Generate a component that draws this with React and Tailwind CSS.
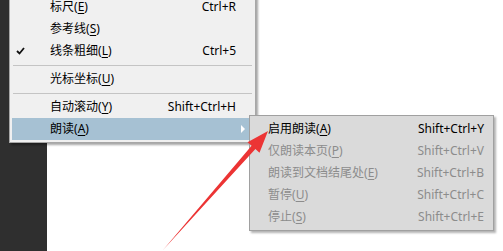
import React from 'react';

const font = { fontFamily: '"Noto Sans", "Noto Sans CJK SC", sans-serif' };

const mainItems = [
  { label: '标尺', key: 'E', shortcut: 'Ctrl+R' },
  { label: '参考线', key: 'S' },
  { label: '线条粗细', key: 'L', shortcut: 'Ctrl+5', checked: true },
  { sep: true },
  { label: '光标坐标', key: 'U' },
  { sep: true },
  { label: '自动滚动', key: 'Y', shortcut: 'Shift+Ctrl+H' },
  { label: '朗读', key: 'A', active: true, sub: true },
];

const subItems = [
  { label: '启用朗读', key: 'A', shortcut: 'Shift+Ctrl+Y' },
  { label: '仅朗读本页', key: 'P', shortcut: 'Shift+Ctrl+V', disabled: true },
  { label: '朗读到文档结尾处', key: 'E', shortcut: 'Shift+Ctrl+B', disabled: true },
  { label: '暂停', key: 'U', shortcut: 'Shift+Ctrl+C', disabled: true },
  { label: '停止', key: 'S', shortcut: 'Shift+Ctrl+E', disabled: true },
];

const Label = ({ label, k }) => (
  <span>
    {label}(<span className="underline underline-offset-2">{k}</span>)
  </span>
);

const MainMenu = () => (
  <div className="absolute left-[9px] top-[-7px] w-[247px] border border-[#a7a7a7] bg-[#f0f0f0] p-[2px] shadow-[2px_2px_2px_rgba(0,0,0,0.35)]">
    {mainItems.map((item, i) =>
      item.sep ? (
        <div key={i} className="flex h-[6px] items-center pl-[1px] pr-[1px]">
          <div className="h-px w-full bg-[#c4c4c4]" />
        </div>
      ) : (
        <div
          key={i}
          className={`relative flex h-[22px] items-center justify-between pl-[38px] pr-[17px] text-[12px] text-black ${
            item.active ? 'bg-[#a6c1d3]' : ''
          }`}
        >
          {item.checked && (
            <svg className="absolute left-[4px] top-[7px]" width="9" height="8" viewBox="0 0 9 8">
              <path d="M1 4 L3.5 6.5 L8 1" fill="none" stroke="#111" strokeWidth="1.8" />
            </svg>
          )}
          <Label label={item.label} k={item.key} />
          {item.shortcut && <span>{item.shortcut}</span>}
          {item.sub && (
            <svg className="absolute right-[8px] top-[7px]" width="4" height="8" viewBox="0 0 4 8">
              <path d="M0 0 L4 4 L0 8 Z" fill="#ffffff" />
            </svg>
          )}
        </div>
      )
    )}
  </div>
);

const SubMenu = () => (
  <div className="absolute left-[249px] top-[115px] w-[245px] border border-[#a0a0a0] bg-[#dadada] py-[2px] px-[2px] shadow-[2px_2px_2px_rgba(0,0,0,0.3)]">
    {subItems.map((item, i) => (
      <div
        key={i}
        className={`flex h-[22px] items-center justify-between pl-[16px] pr-[7px] text-[12px] ${
          item.disabled ? 'text-[#8c8c8c]' : 'text-black'
        }`}
      >
        <Label label={item.label} k={item.key} />
        <span>{item.shortcut}</span>
      </div>
    ))}
  </div>
);

const Arrow = () => (
  <svg className="absolute left-0 top-0" width="503" height="251" viewBox="0 0 503 251">
    <polygon
      points="163,250 255.4,149.1 259.5,152.8 268,131 247.5,142.2 251.6,145.8"
      fill="#ec3434"
    />
  </svg>
);

export default function App() {
  return (
    <div className="relative flex h-[251px] w-[503px] overflow-hidden bg-white" style={font}>
      <div className="h-full w-[47px] bg-[#2f2f2f]" />
      <div className="flex-1 bg-white" />
      <MainMenu />
      <SubMenu />
      <Arrow />
    </div>
  );
}
